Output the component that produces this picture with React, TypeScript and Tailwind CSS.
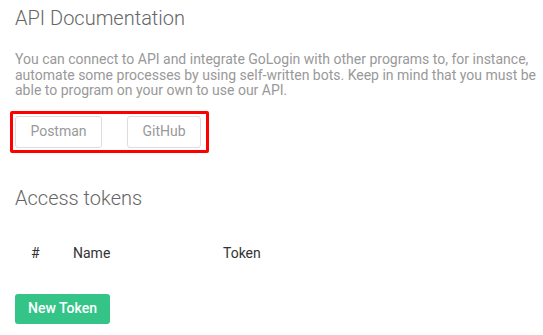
export default function App() {
  return (
    <div className="w-[543px] h-[335px] bg-white px-[15px] pt-[4px] font-['Roboto',sans-serif] overflow-hidden">
      <h2 className="text-[20px] leading-[28px] font-light text-[#666]">API Documentation</h2>
      <p className="mt-[20px] text-[14px] leading-[15.5px] text-[#999] w-[525px]">
        You can connect to API and integrate GoLogin with other programs to, for instance, automate some processes by
        using self-written bots. Keep in mind that you must be able to program on your own to use our API.
      </p>
      <div className="mt-[12px] -ml-[5px] w-[199px] border-[3px] border-[#ff0000] rounded-[2px] px-[2px] py-[2px] flex gap-[25px]">
        <button className="w-[87px] h-[32px] border border-[#ddd] rounded-[3px] text-[14px] text-[#999]">Postman</button>
        <button className="w-[74px] h-[32px] border border-[#ddd] rounded-[3px] text-[14px] text-[#999]">GitHub</button>
      </div>
      <h2 className="mt-[31px] text-[20px] leading-[28px] font-light text-[#666]">Access tokens</h2>
      <div className="mt-[31px] flex text-[14px] text-[#333]">
        <span className="w-[58px] pl-[16px]">#</span>
        <span className="w-[150px]">Name</span>
        <span>Token</span>
      </div>
      <button className="mt-[30px] w-[95px] h-[30px] rounded-[3px] bg-[#34c488] text-white text-[14px] font-medium">
        New Token
      </button>
    </div>
  );
}
